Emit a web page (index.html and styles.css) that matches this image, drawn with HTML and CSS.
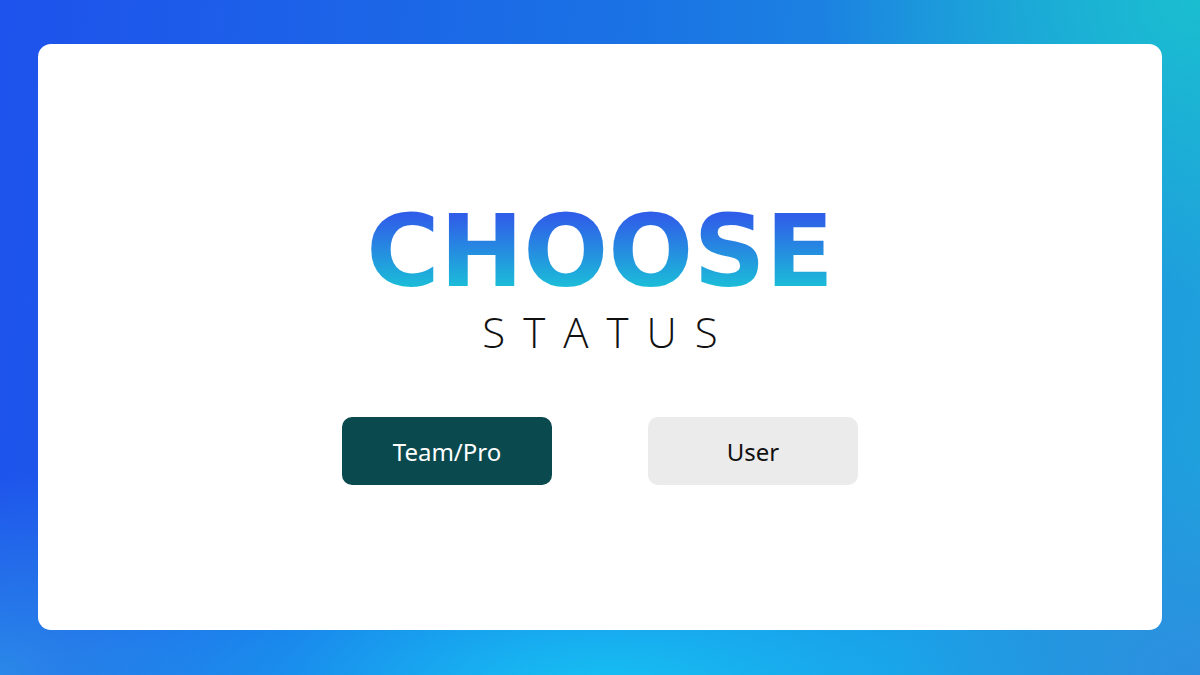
FILE: index.html
```html
<!DOCTYPE html>
<html>
<head>
<meta charset="utf-8">
<link rel="stylesheet" href="styles.css">
</head>
<body>
<div class="page">
  <main class="card">
    <h1 class="title">CHOOSE</h1>
    <div class="subtitle">STATUS</div>
    <div class="buttons">
      <button class="btn btn-primary">Team/Pro</button>
      <button class="btn btn-secondary">User</button>
    </div>
  </main>
</div>
</body>
</html>
```

FILE: styles.css
```css
html, body {
  margin: 0;
  padding: 0;
  width: 1200px;
  height: 675px;
  overflow: hidden;
}
.page {
  box-sizing: border-box;
  width: 1200px;
  height: 675px;
  padding: 44px 38px 45px 38px;
  background:
    radial-gradient(ellipse 380px 300px at 1200px 0px, rgba(26, 190, 208, 1), rgba(26, 190, 208, 0) 100%),
    radial-gradient(ellipse 300px 220px at 1200px 675px, rgba(44, 142, 224, 1), rgba(44, 142, 224, 0) 100%),
    radial-gradient(ellipse 560px 230px at 600px 700px, rgba(22, 196, 244, 1), rgba(22, 196, 244, 0) 100%),
    radial-gradient(ellipse 300px 200px at 0px 675px, rgba(42, 136, 232, 1), rgba(42, 136, 232, 0) 100%),
    linear-gradient(95deg, #1e52ec 0%, #1a72e4 50%, #1fa2dc 100%);
  display: flex;
}
.card {
  flex: 1;
  background: #ffffff;
  border-radius: 13px;
  display: flex;
  flex-direction: column;
  align-items: center;
  padding-top: 158px;
  box-sizing: border-box;
}
.title {
  margin: 0;
  font-family: "DejaVu Sans", sans-serif;
  font-weight: 700;
  font-size: 100px;
  line-height: 100px;
  letter-spacing: 0px;
  background: linear-gradient(180deg, #2f5fe8 15%, #1bbdd8 85%);
  -webkit-background-clip: text;
  background-clip: text;
  color: transparent;
}
.subtitle {
  margin-top: 10px;
  font-family: "Open Sans", sans-serif;
  font-weight: 300;
  font-size: 42px;
  line-height: 40px;
  letter-spacing: 18px;
  margin-right: -18px;
  color: #111111;
}
.buttons {
  display: flex;
  gap: 96px;
  margin-top: 65px;
}
.btn {
  width: 210px;
  height: 68px;
  border: none;
  border-radius: 10px;
  font-family: "Noto Sans", sans-serif;
  font-size: 24px;
  padding: 0;
}
.btn-primary {
  background: #0a4a4f;
  color: #ffffff;
}
.btn-secondary {
  background: #ebebeb;
  color: #111111;
}
```
